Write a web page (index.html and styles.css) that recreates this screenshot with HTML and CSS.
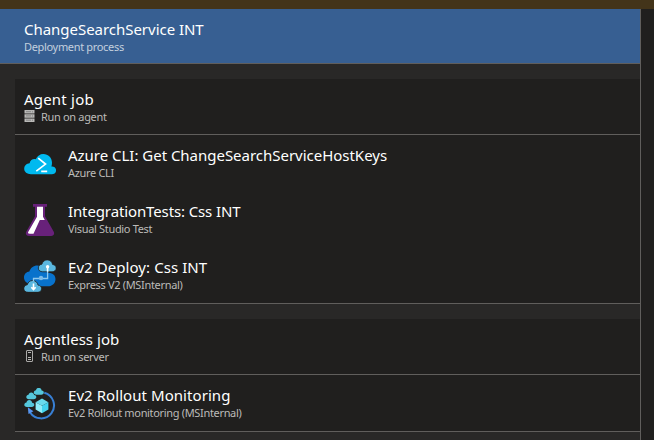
FILE: index.html
```html
<!DOCTYPE html>
<html lang="en">
<head>
<meta charset="utf-8">
<title>Deployment process</title>
<link rel="stylesheet" href="styles.css">
</head>
<body>
<div class="notice"></div>
<div class="workspace">
  <main class="pipeline">
    <header class="process">
      <div class="title t-process">ChangeSearchService INT</div>
      <div class="subtitle">Deployment process</div>
    </header>
    <section class="job">
      <header class="job-head">
        <div class="title t-agent">Agent job</div>
        <div class="subtitle">
          <svg class="mini" viewBox="0 0 11 12"><path fill="#b9b9b7" d="M.5 0h10v3.500H.5zM.5 4.200h10v3.500H.5zM.5 8.400h10v3.600H.5z"/><path stroke="#777" stroke-width=".8" d="M2 1.700h5M2 5.900h5M2 10.200h5"/><path stroke="#888" stroke-width=".8" d="M8.500 1v1.500M8.500 5.200v1.500M8.500 9.500V11"/></svg>
          <span>Run on agent</span>
        </div>
      </header>
      <div class="tasks">
        <article class="task">
          <svg class="icon" viewBox="0 0 32 32"><path fill="#00b9ef" d="M7 26.200C3 26.200.2 24 .2 20.800c0-3.100 2.300-5.400 5.400-5.500C6.400 12 9 10.600 11.800 11.300 13.300 8 16 6 19.300 6c5 0 8.700 3.900 8.700 8.700 0 1.500-.2 2.700-.6 3.800 2.700-.3 4.700 1.400 4.700 3.800s-1.700 3.900-4.300 3.900z"/><path fill="none" stroke="#fff" stroke-width="1.700" d="M14.200 10.200l7.300 5.900-9.200 7M17.200 23.300h6"/></svg>
          <div>
            <div class="title t-azure">Azure CLI: Get ChangeSearchServiceHostKeys</div>
            <div class="subtitle">Azure CLI</div>
          </div>
        </article>
        <article class="task">
          <svg class="icon" viewBox="0 0 32 32"><path fill="#68217a" d="M9 0h14v2.800h-2v9.500l8.600 15.300c1.200 2.300.2 4.400-2.300 4.400H4.700c-2.500 0-3.500-2.100-2.300-4.400L11 12.300V2.800H9z"/><path fill="#fff" d="M13 2.800h6v10l1.800 3.200h-5L9.500 29.800H5.800c-1.800 0-2.100-.8-1.500-2L13 12.800z"/></svg>
          <div>
            <div class="title t-tests">IntegrationTests: Css INT</div>
            <div class="subtitle">Visual Studio Test</div>
          </div>
        </article>
        <article class="task">
          <svg class="icon" viewBox="0 0 32 32"><path fill="#0872cc" d="M6 23.500c-3.500 0-6-2.600-6-6 0-3.200 2.400-5.600 5.400-5.900C6.400 8 9.500 5.500 13.300 5.500c5.200 0 9 3.100 10.200 7.200 4.800-.1 8 2.200 8 6.300 0 4.300-3.200 7.300-7.500 7.300H13z"/><g fill="#5ab7df" stroke="#201f1e" stroke-width=".8"><path d="M18.700 11.800c-2.500 0-4.400-1.400-4.400-3.800 0-2 1.600-3.600 3.600-3.800.7-2.500 2.600-4.300 5.300-4.300 2.900 0 5 2 5.400 4.600 2.100.1 3.600 1.500 3.600 3.600s-1.700 3.700-4.100 3.700z"/><path d="M4.200 32.300C1.800 32.300-.2 31-.2 28.600c0-2 1.500-3.600 3.500-3.800.7-2.500 2.600-4.300 5.300-4.300 2.900 0 5 2 5.400 4.600 2.100.1 3.600 1.500 3.600 3.600s-1.700 3.600-4.100 3.600z"/></g><path fill="none" stroke="#8fc8ec" stroke-width="1.300" d="M23.600 11v7.500H9.500v3"/><path fill="none" stroke="#fff" stroke-width="1.600" d="M23.600 11.500V7M9.500 23.500v6M7.300 27.300l2.200 2.200 2.200-2.200"/><circle cx="23.600" cy="6.700" r="1.700" fill="#fff"/><circle cx="17" cy="18" r="2.200" fill="#7bbbe9"/></svg>
          <div>
            <div class="title t-deploy">Ev2 Deploy: Css INT</div>
            <div class="subtitle">Express V2 (MSInternal)</div>
          </div>
        </article>
      </div>
    </section>
    <section class="job">
      <header class="job-head">
        <div class="title t-agentless">Agentless job</div>
        <div class="subtitle">
          <svg class="mini" viewBox="0 0 11 12"><rect x="2.500" y=".5" width="6" height="11" rx=".5" fill="none" stroke="#aaa9a7"/><path stroke="#b9b9b7" d="M4 2.500h3M4 7.500h3M4 9.500h3"/></svg>
          <span>Run on server</span>
        </div>
      </header>
      <div class="tasks">
        <article class="task">
          <svg class="icon" viewBox="0 0 32 32"><path fill="none" stroke="#387fd4" stroke-width="2" d="M20.300 4.800A13 13 0 1 1 6 24.300"/><path fill="#5795ee" d="M3.800 19.300l5.600 3.900-4.900 2.900z"/><g fill="#55c7dc"><path id="puff" d="M12.400 6.800c-1.600 0-2.600-.9-2.600-2.200s.9-2.200 2.200-2.300C12.200.8 13.200-.1 14.700-.1c1.600 0 2.700 1 2.900 2.600 1.400 0 2.200.9 2.200 2.100 0 1.300-1 2.200-2.500 2.200z"/><use href="#puff" x="-7.500" y="4.500"/><use href="#puff" x="-9.500" y="12.200"/></g><path fill="#69dced" d="M18 10.600l6.400 3.600-6.400 3.600-6.400-3.600z"/><path fill="#8feefa" d="M11.600 14.200l6.400 3.600v7.400l-6.400-3.700z"/><path fill="#43d4ef" d="M24.400 14.200L18 17.800v7.400l6.400-3.700z"/></svg>
          <div>
            <div class="title t-rollout">Ev2 Rollout Monitoring</div>
            <div class="subtitle">Ev2 Rollout monitoring (MSInternal)</div>
          </div>
        </article>
      </div>
    </section>
  </main>
  <aside class="details"></aside>
</div>
</body>
</html>
```
FILE: styles.css
```css
* { box-sizing: border-box; }
body {
  margin: 0;
  height: 440px;
  display: flex;
  flex-direction: column;
  overflow: hidden;
  background: #201f1e;
  color: #fff;
  font-family: "Noto Sans", "Open Sans", sans-serif;
}
.notice { height: 9px; flex: none; background: #43341a; }
.workspace { flex: 1; display: flex; min-height: 0; }
.pipeline {
  width: 641px;
  border-right: 1px solid #605e5c;
  background: #292827;
}
.details { flex: 1; }
.process {
  height: 55px;
  padding: 10px 24px 0;
  background: #375f92;
  border-bottom: 1px solid #605e5c;
}
.process .subtitle { color: #c3cfde; }
.job { margin: 15px 0 0 15px; background: #201f1e; }
.job-head {
  height: 56px;
  padding: 10px 9px 0;
  border-bottom: 1px solid #605e5c;
}
.tasks { border-bottom: 1px solid #605e5c; }
.task {
  height: 56px;
  padding: 10px 9px 0;
  display: flex;
  gap: 12px;
}
.icon { width: 32px; height: 32px; margin-top: 3px; flex: none; }
.title {
  height: 20px;
  font-size: 15px;
  line-height: 20px;
  white-space: nowrap;
}
.t-process { letter-spacing: -0.03px; }
.t-agent { letter-spacing: 0.2px; }
.t-azure { letter-spacing: -0.02px; }
.t-tests { letter-spacing: -0.12px; }
.t-deploy { letter-spacing: 0.07px; }
.t-agentless { letter-spacing: 0.05px; }
.t-rollout { letter-spacing: 0.06px; }
.subtitle {
  display: flex;
  align-items: center;
  height: 16px;
  font-size: 11px;
  line-height: 16px;
  letter-spacing: -0.33px;
  color: #bcbbb9;
  white-space: nowrap;
}
.mini { width: 11px; height: 12px; margin: 0 6px 2px 0; }
```
